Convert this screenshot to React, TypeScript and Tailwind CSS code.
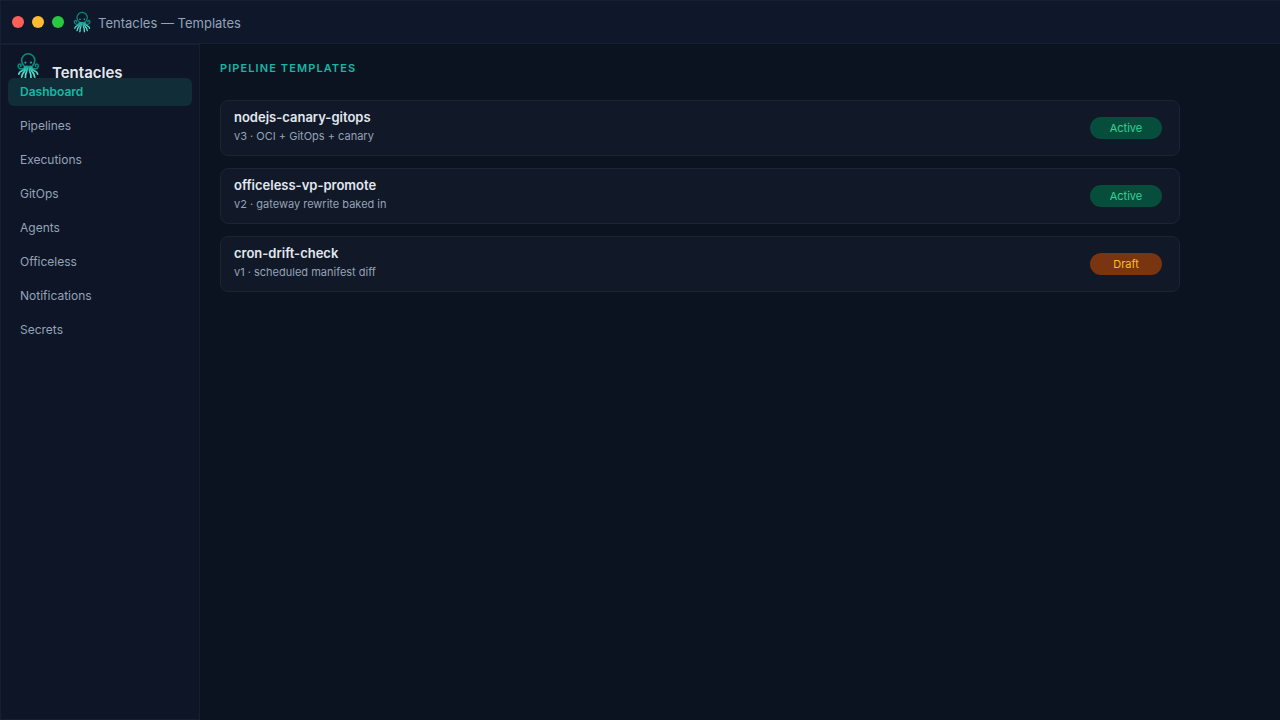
import { useId } from 'react';

const navItems = [
  'Dashboard',
  'Pipelines',
  'Executions',
  'GitOps',
  'Agents',
  'Officeless',
  'Notifications',
  'Secrets',
];

type Status = 'Active' | 'Draft';

const templates: { name: string; detail: string; status: Status }[] = [
  { name: 'nodejs-canary-gitops', detail: 'v3 · OCI + GitOps + canary', status: 'Active' },
  { name: 'officeless-vp-promote', detail: 'v2 · gateway rewrite baked in', status: 'Active' },
  { name: 'cron-drift-check', detail: 'v1 · scheduled manifest diff', status: 'Draft' },
];

const statusStyles: Record<Status, string> = {
  Active: 'bg-[#064e3b] text-[#34d399]',
  Draft: 'bg-[#78350f] text-[#fbbf24]',
};

function Octopus({ className }: { className: string }) {
  const gradientId = useId();
  return (
    <svg viewBox="0 0 28 28" fill="none" strokeLinecap="round" className={className} aria-hidden="true">
      <linearGradient id={gradientId} gradientUnits="userSpaceOnUse" x1="0" y1="13" x2="0" y2="21">
        <stop offset="0" stopColor="#149488" />
        <stop offset="1" stopColor="#4fe0cf" />
      </linearGradient>
      <g stroke="#0d867c" strokeWidth="1.6">
        <path d="M10.4 14.4C8.8 12.8 7.6 10.8 7.6 8.4a6.6 6.6 0 0 1 13.2 0c0 2.4-1.2 4.4-2.8 6" />
        <path d="M10.6 15.4C9 17.6 4.8 17.4 4.2 14.6c-.4-2 1.2-3 2.4-2.2.8.6.6 1.6 0 1.8" />
        <path d="M17.8 15.4c1.6 2.2 5.8 2 6.4-.8.4-2-1.2-3-2.4-2.2-.8.6-.6 1.6 0 1.8" />
      </g>
      <g fill="#14a899">
        <circle cx="11.4" cy="10.6" r="1.1" />
        <circle cx="17" cy="10.6" r="1.1" />
      </g>
      <g stroke={`url(#${gradientId})`} strokeWidth="1.7">
        <path d="M11.2 14.6C10.8 18 8.6 18.6 7 19.2c-1.8.6-2 2-2.2 3" />
        <path d="M12.2 14.4C12 19 10 20 8.8 21.6c-.8 1-.4 2.4-1.2 3.4" />
        <path d="M13.4 14.4c0 4.6-1.4 6.4-1.8 8.2-.2 1.4.2 2.6-.4 3.8" />
        <path d="M15 14.4c0 4.6 1.4 6.4 1.8 8.2.2 1.4-.2 2.6.4 3.8" />
        <path d="M16.2 14.4c.2 4.6 2.2 5.6 3.4 7.2.8 1 .4 2.4 1.2 3.4" />
        <path d="M17.2 14.6c.4 3.4 2.6 4 4.2 4.6 1.8.6 2 2 2.2 3" />
      </g>
    </svg>
  );
}

export default function App() {
  return (
    <div className="flex min-h-screen flex-col bg-[#0b1220] font-['Inter',sans-serif] text-[#94a3b8]">
      <header className="flex h-11 items-center border border-r-0 border-[#152131] bg-[#0f172a] pl-[11px]">
        <div className="flex gap-2">
          <span className="size-3 rounded-full bg-[#ff5f57]" />
          <span className="size-3 rounded-full bg-[#febc2e]" />
          <span className="size-3 rounded-full bg-[#28c840]" />
        </div>
        <Octopus className="ml-[7px] size-[22px]" />
        <h1 className="ml-[5px] pt-[2px] text-[13px] leading-4">Tentacles — Templates</h1>
      </header>
      <div className="flex flex-1">
        <aside className="w-[200px] shrink-0 border border-[#152131] bg-[#0e1526] px-[7px]">
          <div className="flex h-[33px] items-start gap-[10px] pt-[7px] pl-[6px]">
            <Octopus className="size-7 shrink-0" />
            <span className="pt-[11px] text-[15px] leading-5 font-semibold text-[#e2e8f0]">Tentacles</span>
          </div>
          <nav className="relative flex flex-col gap-[6px]">
            {navItems.map((item, i) => (
              <a
                key={item}
                href="#"
                className={`flex h-7 items-center rounded-md px-3 text-[12px] leading-4 ${
                  i === 0 ? 'bg-[#102d38] font-semibold text-[#14b8a6]' : ''
                }`}
              >
                {item}
              </a>
            ))}
          </nav>
        </aside>
        <main className="flex-1 pt-4 pr-[100px] pl-5">
          <h2 className="text-[11px] leading-4 font-semibold tracking-widest text-[#14b8a6]">PIPELINE TEMPLATES</h2>
          <ul className="mt-6 flex flex-col gap-3">
            {templates.map((t) => (
              <li
                key={t.name}
                className="flex h-14 items-center justify-between rounded-lg border border-[#1a2534] bg-[#111827] pr-[17px] pl-[13px]"
              >
                <div className="pb-1">
                  <h3 className="pb-[2px] text-[13px] leading-[18px] font-semibold text-[#e2e8f0]">{t.name}</h3>
                  <p className="text-[11px] leading-4">{t.detail}</p>
                </div>
                <span
                  className={`flex h-[22px] w-[72px] items-center justify-center rounded-full text-[11px] leading-4 ${statusStyles[t.status]}`}
                >
                  {t.status}
                </span>
              </li>
            ))}
          </ul>
        </main>
      </div>
    </div>
  );
}
